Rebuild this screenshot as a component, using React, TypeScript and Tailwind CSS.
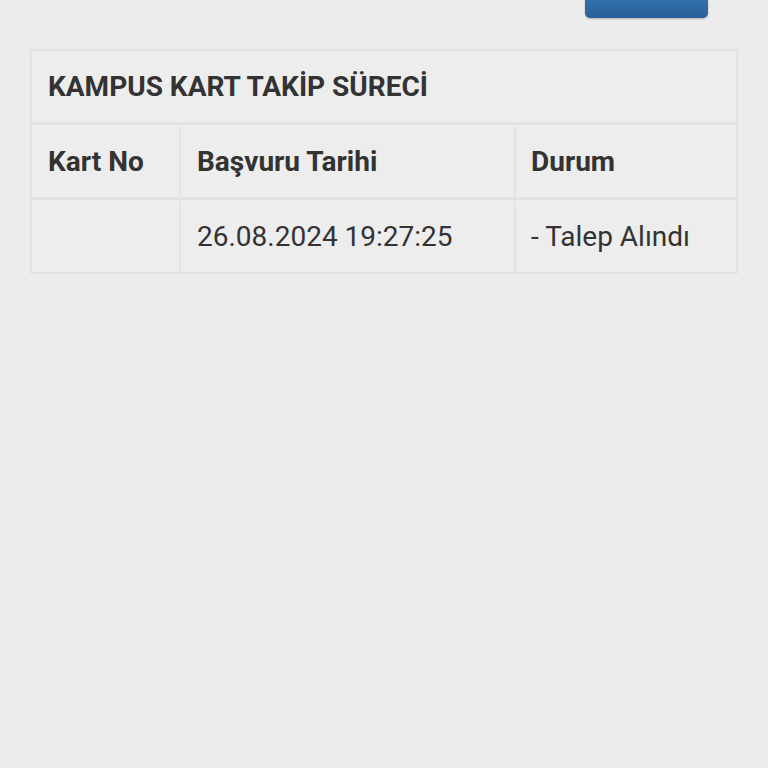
export default function App() {
  const font = { fontFamily: 'Roboto, "Noto Sans", sans-serif' };

  return (
    <div className="min-h-[768px] w-[768px] bg-[#ececec] text-[#333333]" style={font}>
      {/* üst buton */}
      <div className="flex justify-end pr-[60px]">
        <div className="h-[18px] w-[123px] rounded-b-[5px] bg-gradient-to-b from-[#3270ad] to-[#2a5f97] shadow-[0_1px_2px_rgba(0,0,0,0.25)]"></div>
      </div>

      {/* takip tablosu */}
      <div className="ml-[30px] mt-[31px] w-[708px] border-2 border-[#e3e3e3] bg-[#ededed]">
        <div className="flex h-[74px] items-center border-b-[3px] border-[#e2e2e2] px-[16px] pt-[1px]">
          <h2 className="text-[28px] font-bold">KAMPUS KART TAKİP SÜRECİ</h2>
        </div>

        <div className="flex h-[75px] border-b-[3px] border-[#e2e2e2] pt-[2px] text-[28px] font-bold">
          <div className="flex w-[149px] items-center border-r-2 border-[#e3e3e3] pl-[16px]">Kart No</div>
          <div className="flex w-[335px] items-center border-r-2 border-[#e3e3e3] pl-[16px]">Başvuru Tarihi</div>
          <div className="flex flex-1 items-center pl-[15px]">Durum</div>
        </div>

        <div className="flex h-[72px] pt-[1px] text-[28px]">
          <div className="w-[149px] border-r-2 border-[#e3e3e3]"></div>
          <div className="flex w-[335px] items-center border-r-2 border-[#e3e3e3] pl-[16px]">26.08.2024 19:27:25</div>
          <div className="flex flex-1 items-center pl-[15px]">- Talep Alındı</div>
        </div>
      </div>
    </div>
  );
}
